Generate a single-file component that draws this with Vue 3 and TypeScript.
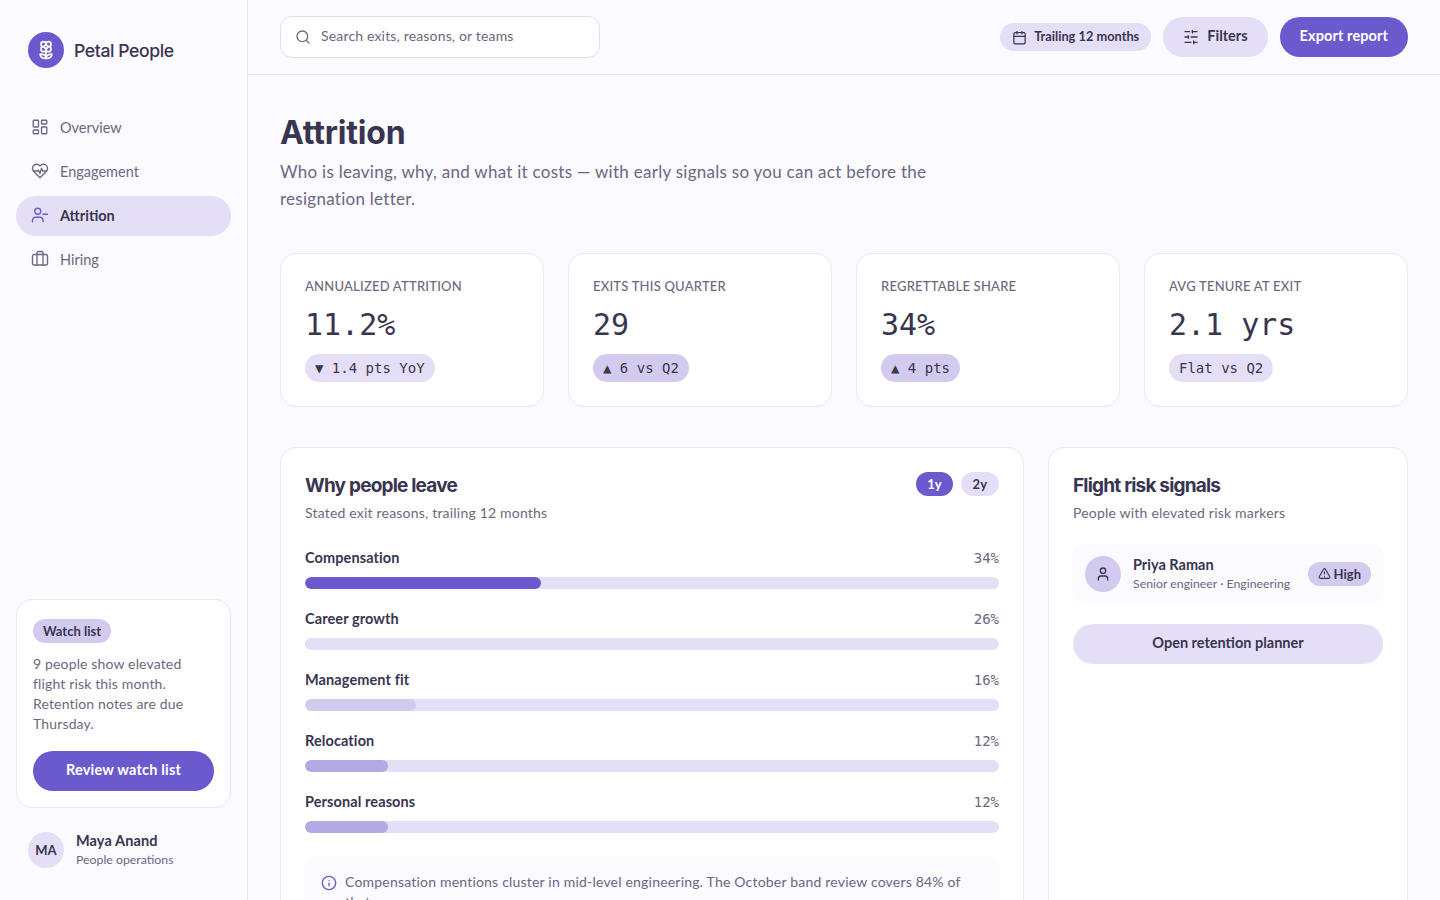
<script setup lang="ts">
interface Kpi { label: string; value: string; delta: string; tone: string }
interface Reason { name: string; pct: number; color: string }

const nav = [
  { name: 'Overview', icon: 'grid' },
  { name: 'Engagement', icon: 'heart' },
  { name: 'Attrition', icon: 'user', active: true },
  { name: 'Hiring', icon: 'case' },
]

const kpis: Kpi[] = [
  { label: 'Annualized attrition', value: '11.2%', delta: '▼ 1.4 pts YoY', tone: 'soft' },
  { label: 'Exits this quarter', value: '29', delta: '▲ 6 vs Q2', tone: 'mid' },
  { label: 'Regrettable share', value: '34%', delta: '▲ 4 pts', tone: 'mid' },
  { label: 'Avg tenure at exit', value: '2.1 yrs', delta: 'Flat vs Q2', tone: 'soft' },
]

const reasons: Reason[] = [
  { name: 'Compensation', pct: 34, color: '#6a5acd' },
  { name: 'Career growth', pct: 26, color: '#e4dff7' },
  { name: 'Management fit', pct: 16, color: '#d2cbef' },
  { name: 'Relocation', pct: 12, color: '#b3a9e5' },
  { name: 'Personal reasons', pct: 12, color: '#b3a9e5' },
]
</script>

<template>
  <div class="shell">
    <aside class="side">
      <div class="brand">
        <span class="logo">
          <svg viewBox="0 0 24 24" width="20" height="20" fill="none" stroke="#fff" stroke-width="2" stroke-linecap="round" stroke-linejoin="round">
            <path d="M12 5a3 3 0 1 1 3 3m-3-3a3 3 0 1 0-3 3m3-3v1M9 8a3 3 0 1 0 3 3M9 8h1m5 0a3 3 0 1 1-3 3m3-3h-1m-2 3v-1" />
            <circle cx="12" cy="8" r="2" />
            <path d="M12 10v12" />
            <path d="M12 22c4.2 0 7-1.67 7-5-4.2 0-7 1.67-7 5Z" />
            <path d="M12 22c-4.2 0-7-1.67-7-5 4.2 0 7 1.67 7 5Z" />
          </svg>
        </span>
        <span class="brand-name">Petal People</span>
      </div>

      <nav class="nav">
        <a v-for="item in nav" :key="item.name" class="nav-item" :class="{ active: item.active }">
          <svg viewBox="0 0 24 24" width="18" height="18" fill="none" stroke="currentColor" stroke-width="1.8" stroke-linecap="round" stroke-linejoin="round">
            <template v-if="item.icon === 'grid'">
              <rect x="3" y="3" width="7" height="9" rx="1" />
              <rect x="14" y="3" width="7" height="5" rx="1" />
              <rect x="14" y="12" width="7" height="9" rx="1" />
              <rect x="3" y="16" width="7" height="5" rx="1" />
            </template>
            <template v-else-if="item.icon === 'heart'">
              <path d="M19 14c1.49-1.46 3-3.21 3-5.5A5.5 5.5 0 0 0 16.5 3c-1.76 0-3 .5-4.5 2-1.5-1.5-2.74-2-4.5-2A5.5 5.5 0 0 0 2 8.5c0 2.3 1.5 4.05 3 5.5l7 7Z" />
              <path d="M3.22 12H9.5l.5-1 2 4.5 2-7 1.5 3.5h5.27" />
            </template>
            <template v-else-if="item.icon === 'user'">
              <path d="M16 21v-2a4 4 0 0 0-4-4H6a4 4 0 0 0-4 4v2" />
              <circle cx="9" cy="7" r="4" />
              <path d="M22 11h-6" />
            </template>
            <template v-else>
              <path d="M16 20V4a2 2 0 0 0-2-2h-4a2 2 0 0 0-2 2v16" />
              <rect x="2" y="6" width="20" height="14" rx="2" />
            </template>
          </svg>
          <span class="nav-label">{{ item.name }}</span>
        </a>
      </nav>

      <div class="watch">
        <span class="badge">Watch list</span>
        <p>9 people show elevated flight risk this month. Retention notes are due Thursday.</p>
        <button class="btn primary wide">Review watch list</button>
      </div>

      <div class="me">
        <span class="avatar">MA</span>
        <div class="me-text">
          <div class="me-name">Maya Anand</div>
          <div class="me-role">People operations</div>
        </div>
      </div>
    </aside>

    <div class="main">
      <header class="top">
        <label class="search">
          <svg viewBox="0 0 24 24" width="16" height="16" fill="none" stroke="currentColor" stroke-width="2" stroke-linecap="round" stroke-linejoin="round">
            <circle cx="11" cy="11" r="8" />
            <path d="m21 21-4.3-4.3" />
          </svg>
          <span class="search-text">Search exits, reasons, or teams</span>
        </label>
        <div class="top-actions">
          <span class="range">
            <svg viewBox="0 0 24 24" width="15" height="15" fill="none" stroke="currentColor" stroke-width="2" stroke-linecap="round" stroke-linejoin="round">
              <path d="M8 2v4M16 2v4" />
              <rect x="3" y="4" width="18" height="18" rx="2" />
              <path d="M3 10h18" />
            </svg>
            Trailing 12 months
          </span>
          <button class="btn soft filters">
            <svg viewBox="0 0 24 24" width="16" height="16" fill="none" stroke="currentColor" stroke-width="2" stroke-linecap="round" stroke-linejoin="round">
              <path d="M21 4h-7M10 4H3M21 12h-9M8 12H3M21 20h-5M12 20H3M14 2v4M8 10v4M16 18v4" />
            </svg>
            Filters
          </button>
          <button class="btn primary export">Export report</button>
        </div>
      </header>

      <main class="content">
        <h1>Attrition</h1>
        <p class="lead">Who is leaving, why, and what it costs — with early signals so you can act before the resignation letter.</p>

        <section class="kpis">
          <div v-for="k in kpis" :key="k.label" class="card kpi">
            <div class="kpi-label">{{ k.label }}</div>
            <div class="kpi-value">{{ k.value }}</div>
            <span class="delta" :class="k.tone">{{ k.delta }}</span>
          </div>
        </section>

        <section class="panels">
          <div class="card panel">
            <div class="panel-head">
              <div>
                <h2>Why people leave</h2>
                <p class="panel-sub">Stated exit reasons, trailing 12 months</p>
              </div>
              <div class="toggle">
                <span class="tg on">1y</span>
                <span class="tg">2y</span>
              </div>
            </div>
            <div class="bars">
              <div v-for="r in reasons" :key="r.name" class="bar-row">
                <div class="bar-line">
                  <span class="bar-name">{{ r.name }}</span>
                  <span class="bar-pct">{{ r.pct }}%</span>
                </div>
                <div class="track">
                  <div class="fill" :style="{ width: r.pct + '%', background: r.color }"></div>
                </div>
              </div>
            </div>
            <div class="note">
              <svg viewBox="0 0 24 24" width="16" height="16" fill="none" stroke="#6a5acd" stroke-width="2" stroke-linecap="round" stroke-linejoin="round">
                <circle cx="12" cy="12" r="10" />
                <path d="M12 16v-4M12 8h.01" />
              </svg>
              <span>Compensation mentions cluster in mid-level engineering. The October band review covers 84% of that group.</span>
            </div>
          </div>

          <div class="card panel">
            <h2>Flight risk signals</h2>
            <p class="panel-sub">People with elevated risk markers</p>
            <div class="person">
              <span class="p-avatar">
                <svg viewBox="0 0 24 24" width="16" height="16" fill="none" stroke="currentColor" stroke-width="2" stroke-linecap="round" stroke-linejoin="round">
                  <path d="M19 21v-2a4 4 0 0 0-4-4H9a4 4 0 0 0-4 4v2" />
                  <circle cx="12" cy="7" r="4" />
                </svg>
              </span>
              <div class="p-text">
                <div class="p-name">Priya Raman</div>
                <div class="p-role">Senior engineer · Engineering</div>
              </div>
              <span class="risk">
                <svg viewBox="0 0 24 24" width="13" height="13" fill="none" stroke="currentColor" stroke-width="2" stroke-linecap="round" stroke-linejoin="round">
                  <path d="m21.73 18-8-14a2 2 0 0 0-3.48 0l-8 14A2 2 0 0 0 4 21h16a2 2 0 0 0 1.73-3" />
                  <path d="M12 9v4M12 17h.01" />
                </svg>
                High
              </span>
            </div>
            <button class="btn soft wide">Open retention planner</button>
          </div>
        </section>
      </main>
    </div>
  </div>
</template>

<style>
html, body { margin: 0; height: 100%; overflow: hidden; background: #fafaff; }
</style>

<style scoped>
.shell {
  display: flex;
  height: 100vh;
  overflow: hidden;
  background: #fafaff;
  color: #393550;
  font-family: Lato, "Noto Sans", sans-serif;
  font-size: 14px;
}
.side {
  width: 248px;
  flex: none;
  box-sizing: border-box;
  border-right: 1px solid #e8e6f0;
  padding: 32px 16px 31px;
  display: flex;
  flex-direction: column;
}
.brand { display: flex; align-items: center; gap: 10px; padding: 0 12px; }
.logo {
  width: 36px; height: 36px; border-radius: 50%;
  background: #6a5acd;
  display: flex; align-items: center; justify-content: center;
}
.brand-name { font-size: 17.6px; font-weight: 500; letter-spacing: -0.4px; font-family: Inter, sans-serif; }
.nav { margin-top: 40px; display: flex; flex-direction: column; gap: 4px; }
.nav-item {
  height: 40px; border-radius: 20px; padding: 0 16px;
  display: flex; align-items: center; gap: 12px;
  color: #6b6880; font-size: 14.5px;
}
.nav-item svg { margin-left: -1px; margin-right: -1px; position: relative; top: -1px; }
.nav-label { padding-bottom: 2px; }
.nav-item.active { background: #e4dff7; color: #393550; font-weight: 700; }
.nav-item.active svg { color: #6a5acd; }
.watch {
  margin-top: auto;
  background: #fff; border: 1px solid #e8e6f0; border-radius: 16px;
  padding: 19px 16px 16px;
}
.badge {
  display: inline-block; background: #d2cbef; border-radius: 12px;
  padding: 0 10px; height: 24px; line-height: 24px;
  font-size: 13px; font-weight: 700;
}
.watch p { margin: 11px 0 17px; max-width: 165px; color: #6b6880; font-size: 14px; line-height: 20px; letter-spacing: 0.15px; }
.btn {
  height: 40px; border: 0; border-radius: 20px; padding: 0 20px 3px;
  font-family: inherit; font-size: 14.5px; font-weight: 700;
  display: inline-flex; align-items: center; justify-content: center; gap: 8px;
}
.btn svg { position: relative; top: 1px; }
.btn.primary { background: #6a5acd; color: #fff; }
.btn.soft { background: #e4dff7; color: #393550; }
.btn.wide { width: 100%; }
.btn.export { letter-spacing: 0.1px; }
.watch .btn { letter-spacing: 0.2px; }
.me { display: flex; align-items: flex-start; gap: 12px; padding: 0 12px; margin-top: 24px; }
.me-text { margin-top: -1px; }
.avatar {
  width: 36px; height: 36px; border-radius: 50%; background: #e4dff7;
  display: flex; align-items: center; justify-content: center;
  font-size: 13px; font-weight: 700;
}
.me-name { font-size: 14.5px; font-weight: 700; line-height: 20px; letter-spacing: 0.1px; }
.me-role { font-size: 12.3px; color: #6b6880; line-height: 18px; }

.main { flex: 1; min-width: 0; display: flex; flex-direction: column; }
.top {
  height: 75px; flex: none; box-sizing: border-box;
  border-bottom: 1px solid #e8e6f0;
  padding: 0 32px;
  display: flex; align-items: center; justify-content: space-between;
}
.search {
  width: 320px; height: 42px; box-sizing: border-box;
  background: #fff; border: 1px solid #e0deea; border-radius: 12px;
  padding: 0 14px; display: flex; align-items: center; gap: 10px;
  color: #6b6880; font-size: 14px;
}
.search-text { padding-bottom: 3px; letter-spacing: 0.17px; }
.top-actions { display: flex; align-items: center; gap: 12px; }
.range {
  height: 28px; box-sizing: border-box; border-radius: 14px; background: #e4dff7; padding: 0 12px 2px;
  display: inline-flex; align-items: center; gap: 7px;
  font-size: 12.8px; font-weight: 700;
}
.range svg { position: relative; top: 1px; }
.content { padding: 40px 32px 32px; }
h1 {
  margin: 0; font-family: Inter, sans-serif; font-size: 32px; line-height: 36px;
  font-weight: 700; letter-spacing: -0.2px;
}
.lead { margin: 7px 0 0; max-width: 680px; color: #6b6880; font-size: 17px; line-height: 27px; letter-spacing: 0.27px; }
.kpis { margin-top: 41px; display: grid; grid-template-columns: repeat(4, 1fr); gap: 24px; }
.card { background: #fff; border: 1px solid #e8e6f0; border-radius: 16px; box-sizing: border-box; }
.kpi { padding: 24px; height: 154px; }
.kpi-label { font-size: 13px; line-height: 16px; font-weight: 500; letter-spacing: 0.22px; text-transform: uppercase; color: #6b6880; }
.kpi-value { margin-top: 11px; font-family: "DejaVu Sans Mono", monospace; font-size: 30px; line-height: 40px; }
.delta {
  display: inline-block; margin-top: 9px; height: 28px; line-height: 28px; padding: 0 10px;
  border-radius: 14px; font-family: "DejaVu Sans Mono", monospace; font-size: 14px;
}
.delta.soft { background: #e4dff7; }
.delta.mid { background: #d2cbef; }

.panels { margin-top: 40px; display: grid; grid-template-columns: 1fr 360px; gap: 24px; align-items: stretch; }
.panel { padding: 24px; height: 600px; }
.panel-head { display: flex; justify-content: space-between; align-items: flex-start; }
h2 { margin: 0; font-family: Inter, sans-serif; font-size: 19px; line-height: 28px; font-weight: 700; letter-spacing: -0.8px; }
.panel-sub { margin: 3px 0 0; color: #6b6880; font-size: 14px; line-height: 20px; letter-spacing: 0.2px; }
.toggle { display: flex; gap: 8px; }
.tg {
  height: 24px; line-height: 24px; padding: 0 12px; border-radius: 12px;
  background: #e4dff7; font-size: 13px; font-weight: 700;
}
.tg.on { background: #6a5acd; color: #fff; padding: 0 11px; }
.bars { margin-top: 25px; display: flex; flex-direction: column; gap: 20px; }
.bar-line { display: flex; justify-content: space-between; line-height: 20px; margin-bottom: 9px; }
.bar-name { font-size: 14.5px; font-weight: 700; letter-spacing: 0.1px; }
.bar-pct { font-family: "DejaVu Sans Mono", monospace; font-size: 14px; color: #6b6880; }
.track { height: 12px; border-radius: 6px; background: #e4dff7; overflow: hidden; }
.fill { height: 100%; border-radius: 6px; }
.note {
  margin-top: 24px; padding: 15px 16px 16px; border-radius: 12px; background: #fafaff;
  display: flex; gap: 8px; align-items: flex-start;
  color: #6b6880; font-size: 14px; line-height: 20px; letter-spacing: 0.2px;
}
.note svg { flex: none; margin-top: 3px; }
.person {
  margin-top: 21px; padding: 12px; height: 60px; box-sizing: border-box; border-radius: 12px; background: #fafaff;
  display: flex; align-items: flex-start; gap: 12px;
}
.p-avatar {
  width: 36px; height: 36px; flex: none; border-radius: 50%; background: #d2cbef;
  display: flex; align-items: center; justify-content: center;
}
.p-text { flex: 1; min-width: 0; margin-top: -1px; }
.p-name { font-size: 14.5px; font-weight: 700; line-height: 20px; }
.p-role { font-size: 12.3px; color: #6b6880; line-height: 18px; white-space: nowrap; }
.risk {
  height: 24px; box-sizing: border-box; border-radius: 12px; background: #d2cbef; padding: 0 10px 1px;
  display: inline-flex; align-items: center; gap: 3px; align-self: center;
  font-size: 13px; font-weight: 700;
}
.panel > .btn.wide { margin-top: 20px; }
</style>
